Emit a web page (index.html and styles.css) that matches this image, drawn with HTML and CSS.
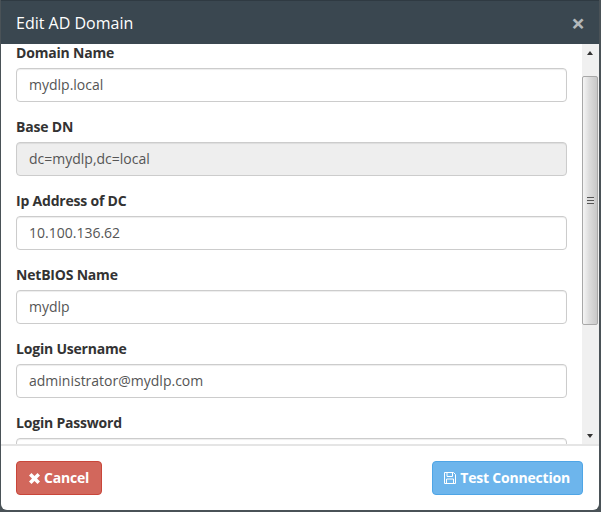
FILE: index.html
```html
<!DOCTYPE html>
<html lang="en">
<head>
<meta charset="utf-8">
<title>Edit AD Domain</title>
<link rel="stylesheet" href="styles.css">
</head>
<body>
<div class="modal">
  <header class="modal-header">
    <h4 class="modal-title">Edit AD Domain</h4>
    <span class="close">×</span>
  </header>
  <div class="modal-middle">
    <form class="modal-body">
      <div class="form-group"><label>Domain Name</label><input type="text" value="mydlp.local"></div>
      <div class="form-group"><label>Base DN</label><input type="text" value="dc=mydlp,dc=local" disabled></div>
      <div class="form-group"><label>Ip Address of DC</label><input type="text" value="10.100.136.62"></div>
      <div class="form-group"><label>NetBIOS Name</label><input type="text" value="mydlp"></div>
      <div class="form-group"><label>Login Username</label><input type="text" value="administrator@mydlp.com"></div>
      <div class="form-group"><label>Login Password</label><input type="password" value=""></div>
    </form>
    <div class="scrollbar">
      <span class="arrow arrow-up"></span>
      <div class="track">
        <div class="thumb"><span class="grip"></span></div>
      </div>
      <span class="arrow arrow-down"></span>
    </div>
  </div>
  <footer class="modal-footer">
    <button type="button" class="btn btn-danger">
      <svg class="icon" width="11" height="11" viewBox="0 0 11 11"><path d="M0 2.500 2.500 0 5.500 3 8.500 0 11 2.500 8 5.500 11 8.500 8.500 11 5.500 8 2.500 11 0 8.500 3 5.500Z" fill="#fff"/></svg>
      Cancel
    </button>
    <button type="button" class="btn btn-primary">
      <svg class="icon" width="12" height="12" viewBox="0 0 12 12"><path d="M.5.500H9.500L11.500 2.500V11.500H.5Z M3 .5V4.500H8.500V.5 M2.500 11.500V7H9.500V11.500" fill="none" stroke="#fff" stroke-width="1"/></svg>
      Test Connection
    </button>
  </footer>
</div>
</body>
</html>
```
FILE: styles.css
```css
* { box-sizing: border-box; }
html, body { height: 100%; }
body {
  margin: 0;
  background: #4a5257;
  font-family: "Open Sans", "Liberation Sans", sans-serif;
  font-size: 14px;
  color: #333;
  overflow: hidden;
}
.modal {
  width: 598px;
  height: 510px;
  margin-left: 1px;
  background: #fff;
  border-radius: 0 0 6px 6px;
  display: flex;
  flex-direction: column;
  overflow: hidden;
}
.modal-header {
  height: 44px;
  flex: none;
  background: #3a4750;
  border-top: 1px solid #2f3a42;
  color: #fff;
  display: flex;
  align-items: center;
  justify-content: space-between;
  padding: 0 14px 0 15px;
}
.modal-title {
  margin: 0;
  font-size: 16px;
  font-weight: 400;
  line-height: 22px;
}
.close {
  font-size: 24px;
  font-weight: 700;
  line-height: 1;
  color: #b3b8bb;
}
.modal-middle {
  flex: 1;
  min-height: 0;
  display: flex;
  border-bottom: 2px solid #e5e5e5;
}
.modal-body {
  flex: 1;
  min-width: 0;
  margin: 0;
  padding: 0 15px;
  overflow: hidden;
}
.form-group { margin: -1px 0 16px; }
.form-group label {
  display: block;
  font-weight: 700;
  line-height: 20px;
  margin-bottom: 5px;
  letter-spacing: -.2px;
}
.form-group input {
  display: block;
  width: 100%;
  height: 34px;
  padding: 5px 12px 7px;
  font: inherit;
  color: #555;
  background: #fff;
  border: 1px solid #ccc;
  border-radius: 4px;
  box-shadow: inset 0 1px 1px rgba(0,0,0,.075);
}
.form-group input:disabled { background: #eee; color: #555; }
.scrollbar {
  width: 17px;
  flex: none;
  background: #f0f0f0;
  display: flex;
  flex-direction: column;
  align-items: center;
}
.arrow {
  flex: none;
  height: 17px;
  width: 100%;
  position: relative;
}
.arrow::after {
  content: "";
  position: absolute;
  left: 5px;
  border-left: 3.500px solid transparent;
  border-right: 3.500px solid transparent;
}
.arrow-up::after { top: 7px; border-bottom: 4px solid #333; }
.arrow-down::after { top: 7px; border-top: 4px solid #333; }
.track {
  flex: 1;
  width: 100%;
  padding-top: 15px;
}
.thumb {
  height: 249px;
  margin: 0 1px 0 0;
  background: linear-gradient(90deg, #f5f5f5, #dcdcdc 45%, #c8c8c8);
  border: 1px solid #a8a8a8;
  border-radius: 2px;
  display: flex;
  align-items: center;
  justify-content: center;
}
.grip {
  width: 7px;
  height: 7px;
  background: repeating-linear-gradient(180deg, #555 0 1px, #ddd 1px 3px);
}
.modal-footer {
  flex: none;
  height: 64px;
  padding: 15px 16px 15px 15px;
  display: flex;
  justify-content: space-between;
}
.btn {
  height: 34px;
  padding: 6px 12px;
  font: 700 14px/20px "Open Sans", "Liberation Sans", sans-serif;
  letter-spacing: -.2px;
  color: #fff;
  border: 1px solid;
  border-radius: 4px;
  display: flex;
  align-items: center;
  gap: 4px;
}
.btn-danger { background: #d2675c; border-color: #c9463a; }
.btn-primary { background: #6db5ec; border-color: #4ea5e6; padding-left: 11px; }
.icon { flex: none; }
```
